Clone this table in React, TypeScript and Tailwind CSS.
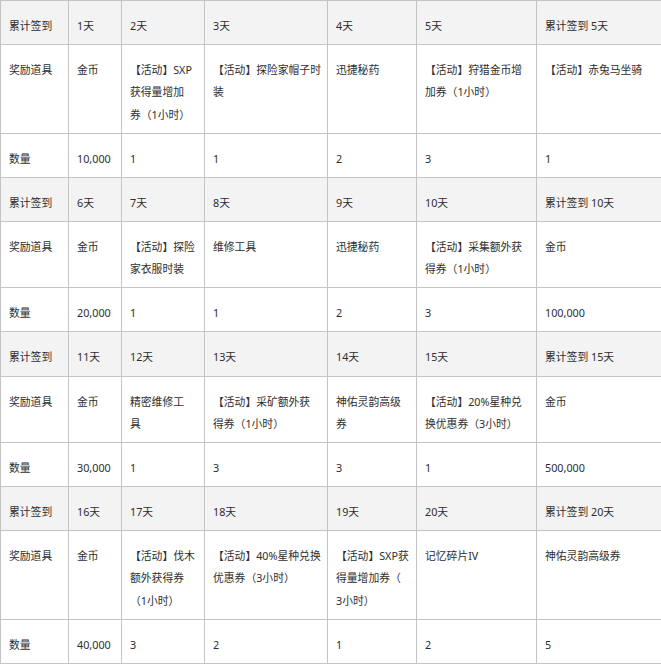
type Block = {
  days: string[]
  items: string[][]
  qty: string[]
}

const blocks: Block[] = [
  {
    days: ['1天', '2天', '3天', '4天', '5天', '累计签到 5天'],
    items: [
      ['金币'],
      ['【活动】SXP', '获得量增加', '券（1小时）'],
      ['【活动】探险家帽子时', '装'],
      ['迅捷秘药'],
      ['【活动】狩猎金币增', '加券（1小时）'],
      ['【活动】赤兔马坐骑'],
    ],
    qty: ['10,000', '1', '1', '2', '3', '1'],
  },
  {
    days: ['6天', '7天', '8天', '9天', '10天', '累计签到 10天'],
    items: [
      ['金币'],
      ['【活动】探险', '家衣服时装'],
      ['维修工具'],
      ['迅捷秘药'],
      ['【活动】采集额外获', '得券（1小时）'],
      ['金币'],
    ],
    qty: ['20,000', '1', '1', '2', '3', '100,000'],
  },
  {
    days: ['11天', '12天', '13天', '14天', '15天', '累计签到 15天'],
    items: [
      ['金币'],
      ['精密维修工', '具'],
      ['【活动】采矿额外获', '得券（1小时）'],
      ['神佑灵韵高级', '券'],
      ['【活动】20%星种兑', '换优惠券（3小时）'],
      ['金币'],
    ],
    qty: ['30,000', '1', '3', '3', '1', '500,000'],
  },
  {
    days: ['16天', '17天', '18天', '19天', '20天', '累计签到 20天'],
    items: [
      ['金币'],
      ['【活动】伐木', '额外获得券', '（1小时）'],
      ['【活动】40%星种兑换', '优惠券（3小时）'],
      ['【活动】SXP获', '得量增加券（', '3小时）'],
      ['记忆碎片IV'],
      ['神佑灵韵高级券'],
    ],
    qty: ['40,000', '3', '2', '1', '2', '5'],
  },
]

const widths = [68, 53, 83, 123, 89, 120, 125]
const cell = 'border border-[#c4c4c4] pl-[8px] pr-[6px] pt-[14px] pb-[6.8px] align-top whitespace-nowrap'

export default function App(){
  return (
    <div className="w-[661px] bg-white text-[#2e2e2e] text-[10.8px] leading-[22.3px]" style={{ fontFamily: '"Noto Sans", "Noto Sans CJK SC", sans-serif' }}>
      <table className="w-[661px] table-fixed border-collapse">
        <colgroup>
          {widths.map((w, i) => <col key={i} style={{ width: w }} />)}
        </colgroup>
        <tbody>
          {blocks.map((b, bi) => [
            <tr key={`d${bi}`} className="bg-[#f3f3f3]">
              <td className={cell}>累计签到</td>
              {b.days.map(d => <td key={d} className={cell}>{d}</td>)}
            </tr>,
            <tr key={`i${bi}`}>
              <td className={cell}>奖励道具</td>
              {b.items.map((lines, i) => (
                <td key={i} className={cell}>
                  {lines.map((l, li) => <div key={li}>{l}</div>)}
                </td>
              ))}
            </tr>,
            <tr key={`q${bi}`}>
              <td className={cell}>数量</td>
              {b.qty.map((q, i) => <td key={i} className={cell}>{q}</td>)}
            </tr>,
          ])}
        </tbody>
      </table>
    </div>
  )
}
